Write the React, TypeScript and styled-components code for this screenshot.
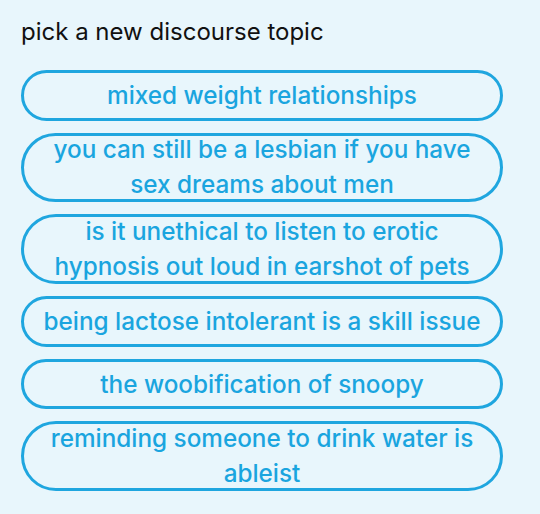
import React from "react";
import styled, { createGlobalStyle } from "styled-components";

const topics = [
  { text: "mixed weight relationships", lines: 1 },
  { text: "you can still be a lesbian if you have sex dreams about men", lines: 2 },
  { text: "is it unethical to listen to erotic hypnosis out loud in earshot of pets", lines: 2 },
  { text: "being lactose intolerant is a skill issue", lines: 1 },
  { text: "the woobification of snoopy", lines: 1 },
  { text: "reminding someone to drink water is ableist", lines: 2 },
];

function App() {
  return (
    <>
      <GlobalStyle />
      <Poll>
        <Question>pick a new discourse topic</Question>
        <Options>
          {topics.map((t, i) => (
            <Option key={i} $lines={t.lines}>
              <span>{t.text}</span>
            </Option>
          ))}
        </Options>
      </Poll>
    </>
  );
}
export default App;

const GlobalStyle = createGlobalStyle`
  html, body {
    margin: 0;
    background: #e8f6fc;
  }
  body {
    font-family: Inter, "Noto Sans", sans-serif;
  }
`;

const Poll = styled.div`
  width: 540px;
  height: 514px;
  box-sizing: border-box;
  padding: 17px 37px 0 21px;
  background: #e8f6fc;
`;

const Question = styled.h2`
  margin: 0 0 23px;
  font-size: 24px;
  font-weight: 400;
  line-height: 30px;
  color: #111;
`;

const Options = styled.div`
  display: flex;
  flex-direction: column;
  gap: 12.2px;
`;

// two-line options only grow a little, so the wrapped text spills onto the border
const Option = styled.button<{ $lines: number }>`
  display: flex;
  align-items: center;
  justify-content: center;
  width: 100%;
  height: ${({ $lines }) => 50.5 + 19 * ($lines - 1)}px;
  box-sizing: border-box;
  padding: 0 16px;
  border: 3px solid #1fa6df;
  border-radius: 999px;
  background: transparent;
  font-family: inherit;
  font-size: 24.3px;
  font-weight: 500;
  line-height: 35px;
  color: #1aa5df;
  text-align: center;
  overflow: visible;

  span {
    display: block;
  }
`;
